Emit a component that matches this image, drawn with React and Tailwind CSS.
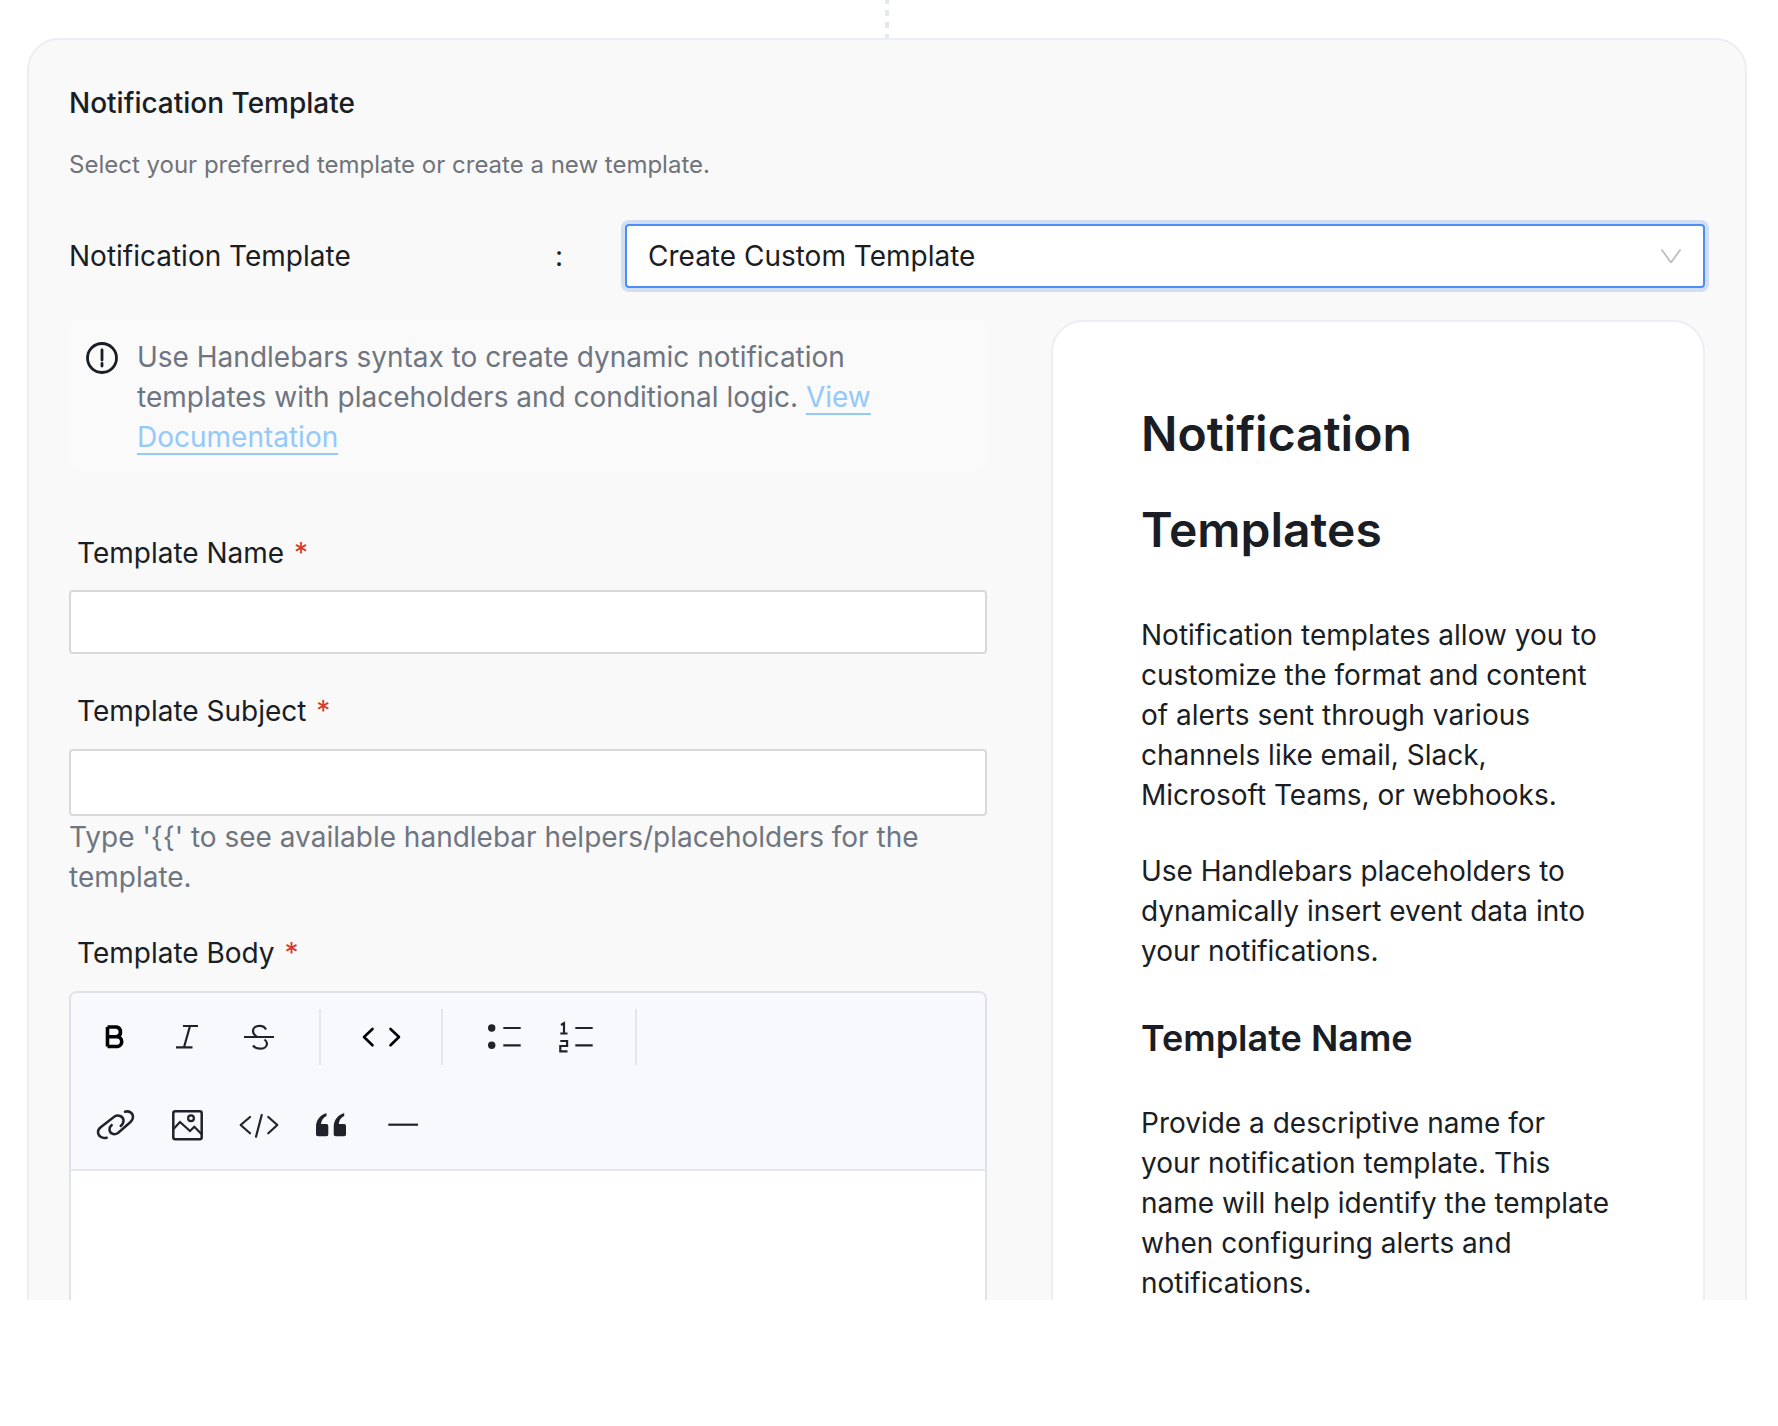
import React from 'react';

const Icon = ({ children, className = '' }) => (
  <svg viewBox="0 0 40 40" fill="none" stroke="currentColor" strokeWidth="2.2" className={`w-10 h-10 overflow-visible ${className}`}>
    {children}
  </svg>
);

const ToolButton = ({ children, dark }) => (
  <div className={`w-[72px] h-14 flex items-center justify-center ${dark ? 'text-black' : 'text-[#1f2329]'}`}>
    <Icon>{children}</Icon>
  </div>
);

const Divider = () => <div className="w-[2px] h-14 mx-6 bg-[#e4e6ea]" />;

const Field = ({ label, height, gap }) => (
  <div>
    <label className="block pl-2 leading-10">
      {label} <span className="text-[#d9392b] ml-[2px]">*</span>
    </label>
    <div className={`${gap} ${height} bg-white border-2 border-[#d9d9d9] rounded`} />
  </div>
);

const Toolbar = () => (
  <div className="bg-[#f8f9fd] border-b-2 border-[#e5e7ea] py-4 pl-2 flex flex-col gap-8">
    <div className="flex">
      <ToolButton dark>
        <path d="M12.5 10v19.5M12.5 10h9a5 5 0 0 1 0 9.8h-9M12.5 19.8h10a4.9 4.9 0 0 1 0 9.7h-10" strokeWidth="3.6" />
      </ToolButton>
      <ToolButton>
        <path d="M16 9h15M9 30.3h16.5M23 9l-6 21.3" />
      </ToolButton>
      <ToolButton>
        <path d="M5 20h30M27 12.5c-1-2.3-3.5-3.7-6.5-3.7-4 0-6.5 2.2-6.5 5 0 2.2 1.2 4.4 4 6.2M25.5 22.5c1.7 1.3 2.5 2.8 2.5 4.2 0 3-3 5-7 5-3 0-5.5-1.1-7-3.2" />
      </ToolButton>
      <Divider />
      <ToolButton dark>
        <path d="M11.5 12L3 20l8.500 8.300M29.500 12L38 20l-8.500 8.300" strokeWidth="2.600" strokeLinecap="round" strokeLinejoin="round" />
      </ToolButton>
      <Divider />
      <ToolButton>
        <circle cx="8.700" cy="11" r="3.700" fill="currentColor" stroke="none" />
        <circle cx="8.700" cy="28.300" r="3.700" fill="currentColor" stroke="none" />
        <path d="M20.300 11h17.400M20.300 28.300h17.400" />
      </ToolButton>
      <ToolButton>
        <path d="M6 8l3-1.800V17M5.300 16.500h7.200M5.300 24h6.800v5h-6.800v5.300h7.200M20.300 11h17.400M20.300 28.300h17.400" />
      </ToolButton>
      <Divider />
    </div>
    <div className="flex">
      <ToolButton>
        <path
          d="M11.700 32.700C7 34 3 31 3 27c0-2 1-3.500 3-5L19.500 11.500c3.500-2 8.500-.5 9 3.500.2 2.500-1 4.500-2.800 6M30 6.700C34 5.500 38 8 38 12c0 2-1 3.500-2.500 5L23 28c-4 2.500-8 .5-8.500-3-.2-2 .5-3.500 2.200-5"
          strokeWidth="2.500"
          strokeLinecap="round"
        />
      </ToolButton>
      <ToolButton>
        <rect x="6.300" y="6.300" width="28.400" height="28" rx="2" strokeWidth="2.500" />
        <circle cx="24" cy="13.300" r="2.900" />
        <path d="M6.300 24.300L13 17l10 9 4.300-4.300 7.400 7.600" />
      </ToolButton>
      <ToolButton>
        <path d="M11 12l-9.300 8 9.300 8.300M29.300 12l9 8-9 8.300M22.700 10L17 31.700" strokeLinecap="round" strokeLinejoin="round" />
      </ToolButton>
      <ToolButton>
        <path
          fill="currentColor"
          stroke="none"
          d="M5 22C5 15 9 10 15.500 8v3c-3 1.500-5 4-5.500 8h5.500q1.800 0 1.800 2v8.500q0 1.800-1.800 1.800H7q-2 0-2-1.800ZM22.700 22c0-7 4-12 10.500-14v3c-3 1.500-5 4-5.500 8h5.500q1.800 0 1.800 2v8.500q0 1.800-1.800 1.800h-8.500q-2 0-2-1.800Z"
        />
      </ToolButton>
      <ToolButton>
        <path d="M5.300 19.700H35" />
      </ToolButton>
    </div>
  </div>
);

const Help = () => (
  <aside className="bg-white border-2 border-[#eceef3] rounded-[32px] pl-[88px] pr-[92px] pt-[64px] pb-20 text-[#1a1d24]">
    <h1 className="text-[48px] leading-[96px] font-semibold">Notification Templates</h1>
    <p className="mt-[37px]">
      Notification templates allow you to customize the format and content of alerts sent through various channels like email, Slack, Microsoft Teams, or webhooks.
    </p>
    <p className="mt-[36px]">Use Handlebars placeholders to dynamically insert event data into your notifications.</p>
    <h2 className="mt-[43px] text-[36px] leading-[48px] font-semibold">Template Name</h2>
    <p className="mt-[41px]">
      Provide a descriptive name for your notification template. This name will help identify the template when configuring alerts and notifications.
    </p>
  </aside>
);

export default function App() {
  return (
    <div className="h-[1426px] bg-white font-['Inter',sans-serif] text-[28px] leading-10 text-[#1a1d24]">
      <div className="h-[1300px] overflow-hidden relative pl-[27px] pr-[31px] pt-[38px]">
        <div className="absolute top-0 left-[885px] w-1 h-[38px] bg-[repeating-linear-gradient(to_bottom,#e3e7ef_0,#e3e7ef_4px,transparent_4px,transparent_10px,#e3e7ef_10px,#e3e7ef_12px)]" />
        <section className="bg-[#f9f9f9] border-2 border-[#eceef3] rounded-[32px] px-10 pt-[41px] pb-10 min-h-[1400px]">
          <h3 className="font-medium leading-[44px]">Notification Template</h3>
          <p className="mt-[22px] text-[24px] leading-9 text-[#6f737a]">Select your preferred template or create a new template.</p>

          <div className="mt-[41px] flex items-center">
            <span className="w-[486px]">Notification Template</span>
            <span className="w-[70px]">:</span>
            <div className="flex-1 h-16 bg-white border-2 border-[#4d8ef5] rounded ring-4 ring-[#d2ddf6] flex items-center justify-between pl-[21px] pr-[22px]">
              <span>Create Custom Template</span>
              <svg viewBox="0 0 20 14" fill="none" stroke="#bdbdbd" strokeWidth="1.800" className="w-5 h-[14px]">
                <path d="M.5.500L10 13.500 19.500.500" />
              </svg>
            </div>
          </div>

          <div className="mt-8 grid grid-cols-[918px_654px] gap-x-[64px] items-start">
            <div>
              <div className="bg-[#fafafa] rounded-lg pt-[17px] pb-[13px] pl-[68px] pr-4 relative text-[#6f7580]">
                <svg viewBox="0 0 32 32" fill="none" className="absolute left-[17px] top-[22px] w-8 h-8 text-[#1a1d24]" stroke="currentColor" strokeWidth="2.800">
                  <circle cx="16" cy="16" r="14.500" />
                  <path d="M16 8v10M16 21.500v2.500" strokeLinecap="round" />
                </svg>
                Use Handlebars syntax to create dynamic notification templates with placeholders and conditional logic.{' '}
                <a className="text-[#93c9fb] underline decoration-2 underline-offset-[6px]">View Documentation</a>
              </div>

              <div className="mt-[63px]">
                <Field label="Template Name" height="h-[64px]" gap="mt-[17px]" />
              </div>
              <div className="mt-[37px]">
                <Field label="Template Subject" height="h-[67px]" gap="mt-[18px]" />
              </div>
              <p className="mt-[1px] text-[#6f7580]">Type '{'{{'}' to see available handlebar helpers/placeholders for the template.</p>

              <label className="block mt-[36px] pl-2 leading-10">
                Template Body <span className="text-[#d9392b] ml-[2px]">*</span>
              </label>
              <div className="mt-[18px] bg-white border-2 border-[#dfe2e7] rounded-lg overflow-hidden h-[500px]">
                <Toolbar />
              </div>
            </div>

            <Help />
          </div>
        </section>
      </div>
    </div>
  );
}
